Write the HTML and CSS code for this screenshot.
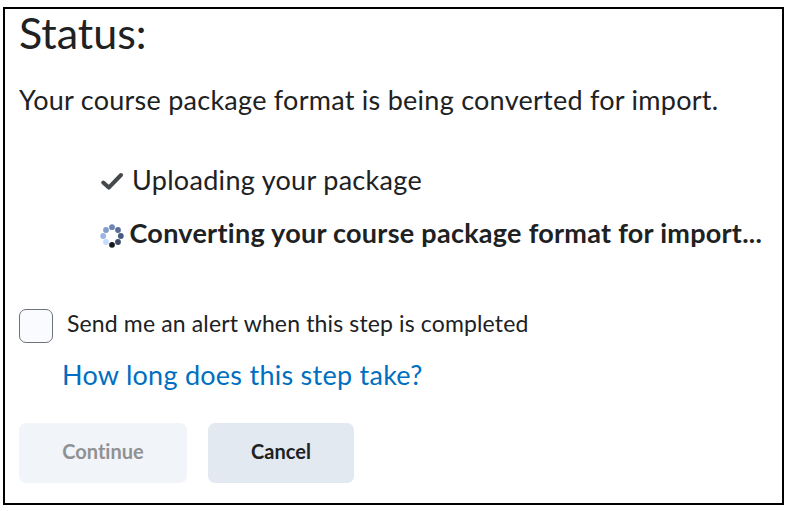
FILE: index.html
```html
<!DOCTYPE html>
<html lang="en">
<head>
  <meta charset="UTF-8" />
  <meta name="viewport" content="width=device-width, initial-scale=1.0" />
  <title>Import Status</title>
  <link rel="stylesheet" href="styles.css">
</head>
<body>
  <main class="panel">
    <h1>Status:</h1>
    <p class="message">Your course package format is being converted for import.</p>

    <ul class="steps">
      <li class="step done">
        <svg class="check" viewBox="0 0 24 24"><path d="M3.2 13.5 L8.8 18.6 L21 6" /></svg>
        <span>Uploading your package</span>
      </li>
      <li class="step current">
        <svg class="spinner" viewBox="0 0 24 24">
          <circle cx="12" cy="3.2" r="2.9" fill="#6d86b4" />
          <circle cx="18" cy="6" r="2.9" fill="#596d98" />
          <circle cx="20.8" cy="12" r="2.9" fill="#475a80" />
          <circle cx="18" cy="18" r="2.9" fill="#3b4b68" />
          <circle cx="12" cy="20.8" r="2.9" fill="#16191e" />
          <circle cx="6" cy="18" r="2.9" fill="#c4dbff" />
          <circle cx="3.2" cy="12" r="2.9" fill="#9ab5e6" />
          <circle cx="6" cy="6" r="2.9" fill="#819dce" />
        </svg>
        <span>Converting your course package format for import...</span>
      </li>
    </ul>

    <label class="alert">
      <input type="checkbox">
      <span>Send me an alert when this step is completed</span>
    </label>
    <a class="help" href="#">How long does this step take?</a>

    <div class="buttons">
      <button class="continue" disabled>Continue</button>
      <button class="cancel">Cancel</button>
    </div>
  </main>
</body>
</html>
```
FILE: styles.css
```css
* {
  box-sizing: border-box;
}

body {
  margin: 0;
  font-family: Lato, sans-serif;
  font-variant-ligatures: none;
  background: #fff;
  color: #202122;
}

.panel {
  width: 781px;
  height: 498px;
  margin: 7px 0 0 3px;
  padding: 0 14px;
  border: 2px solid #000;
  white-space: nowrap;
}

h1 {
  margin: 0;
  font-size: 43px;
  font-weight: 400;
  line-height: 48px;
}

.message {
  margin: 26px 0 0;
  font-size: 27px;
  line-height: 34px;
  letter-spacing: 0.26px;
}

.steps {
  margin: 36px 0 0;
  padding: 0 0 0 81px;
  list-style: none;
}

.step {
  display: flex;
  align-items: center;
  height: 53px;
  font-size: 27px;
  letter-spacing: 0.3px;
}

.check {
  width: 24px;
  height: 24px;
  margin: 3px 8px 0 0;
  fill: none;
  stroke: #45494c;
  stroke-width: 4;
  stroke-linecap: round;
  stroke-linejoin: round;
}

.spinner {
  width: 24px;
  height: 24px;
  margin: 6px 6px 0 -0.5px;
}

.current {
  font-weight: bold;
  letter-spacing: 0.27px;
}

.alert {
  display: flex;
  align-items: center;
  margin-top: 50px;
  font-size: 23px;
  letter-spacing: 0.14px;
}

.alert input {
  appearance: none;
  width: 34px;
  height: 34px;
  margin: 0 14px 0 0;
  border: 1px solid #6e7376;
  border-radius: 7px;
  background: #f9fbff;
}

.alert span {
  margin-bottom: 6px;
}

.help {
  display: block;
  margin: 15px 0 0 43px;
  color: #006fbf;
  font-size: 27px;
  line-height: 34px;
  letter-spacing: 0.26px;
  text-decoration: none;
}

.buttons {
  display: flex;
  gap: 21px;
  margin-top: 31px;
}

button {
  height: 60px;
  padding: 0 0 4px;
  border: 0;
  border-radius: 7px;
  background: #e3e9f1;
  color: #202122;
  font-family: inherit;
  font-size: 20px;
  font-weight: bold;
  font-variant-ligatures: none;
}

.continue {
  width: 168px;
  background: #f1f4f9;
  color: #909192;
}

.cancel {
  width: 146px;
}
```
